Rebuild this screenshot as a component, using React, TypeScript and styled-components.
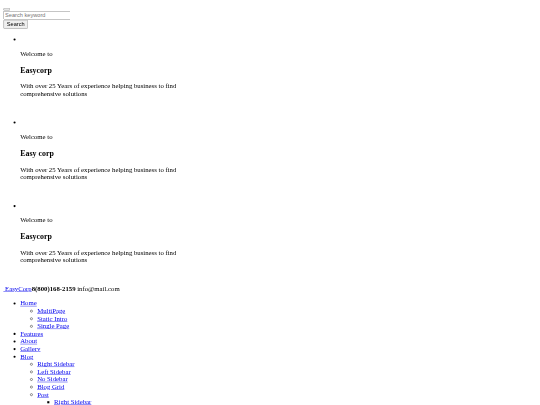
import styled, { createGlobalStyle } from "styled-components";

const GlobalStyle = createGlobalStyle`
  html, body {
    margin: 0;
    padding: 0;
    background: #fff;
    overflow: hidden;
  }
  body {
    font-family: "Liberation Serif", "Times New Roman", serif;
    font-size: 16px;
    color: #000;
  }
`;

// the whole page was captured from a 1280px wide window, scaled down to 540
const Page = styled.div`
  width: 1280px;
  box-sizing: border-box;
  padding: 8px;
  transform: scale(0.421875);
  transform-origin: 0 0;
`;

const Toggler = styled.button`
  font-family: "Liberation Sans", Arial, sans-serif;
  font-size: 13.333px;
`;

const SearchForm = styled.form`
  margin: 0;
`;

const Field = styled.div``;

const SearchInput = styled.input`
  width: 159px;
  box-sizing: border-box;
  font-family: "Liberation Sans", Arial, sans-serif;
  font-size: 13.333px;
  &::placeholder {
    color: #757575;
  }
`;

const SearchButton = styled.button`
  font-family: "Liberation Sans", Arial, sans-serif;
  font-size: 13.333px;
`;

const Slider = styled.ul`
  margin: 16px 0;
  padding-left: 40px;
  list-style: disc;
`;

const Slide = styled.li``;

const Caption = styled.div`
  max-width: 420px;
`;

const Lead = styled.p`
  margin: 16px 0;
`;

const Title = styled.h3`
  font-size: 1.17em;
  font-weight: bold;
  margin: 1em 0;
`;

const Text = styled.p`
  margin: 16px 0;
`;

const Actions = styled.p`
  margin: 16px 0;
`;

const TopBar = styled.div``;

const Link = styled.a`
  color: #0000ee;
  text-decoration: underline;
  cursor: pointer;
`;

const Phone = styled.b`
  font-weight: bold;
`;

const Menu = styled.ul<{ $level: number }>`
  margin: ${(p) => (p.$level === 0 ? "16px 0" : "0")};
  padding-left: 40px;
  list-style: ${(p) => ["disc", "circle", "square"][Math.min(p.$level, 2)]};
`;

const MenuItem = styled.li``;

type NavNode = { label: string; children?: NavNode[] };

const slides = [
  { title: "Easycorp" },
  { title: "Easy corp" },
  { title: "Easycorp" },
];

const nav: NavNode[] = [
  {
    label: "Home",
    children: [
      { label: "MultiPage" },
      { label: "Static Intro" },
      { label: "Single Page" },
    ],
  },
  { label: "Features" },
  { label: "About" },
  { label: "Gallery" },
  {
    label: "Blog",
    children: [
      { label: "Right Sidebar" },
      { label: "Left Sidebar" },
      { label: "No Sidebar" },
      { label: "Blog Grid" },
      {
        label: "Post",
        children: [
          { label: "Right Sidebar" },
          { label: "Left Sidebar" },
          { label: "No Sidebar" },
        ],
      },
    ],
  },
  { label: "Contact" },
];

function NavList({ items, level }: { items: NavNode[]; level: number }) {
  return (
    <Menu $level={level}>
      {items.map((item, i) => (
        <MenuItem key={i}>
          <Link href="#">{item.label}</Link>
          {item.children && <NavList items={item.children} level={level + 1} />}
        </MenuItem>
      ))}
    </Menu>
  );
}

export default function App() {
  return (
    <>
      <GlobalStyle />
      <Page>
        <Toggler type="button" />
        <SearchForm onSubmit={(e) => e.preventDefault()}>
          <Field>
            <SearchInput type="text" placeholder="Search keyword" />
          </Field>
          <SearchButton type="submit">Search</SearchButton>
        </SearchForm>

        <Slider>
          {slides.map((s, i) => (
            <Slide key={i}>
              <span>{"\u00a0"}</span>
              <Caption>
                <Lead>Welcome to</Lead>
                <Title>{s.title}</Title>
                <Text>
                  With over 25 Years of experience helping business to find
                  comprehensive solutions
                </Text>
                <Actions>{"\u00a0"}</Actions>
              </Caption>
            </Slide>
          ))}
        </Slider>

        <TopBar>
          <Link href="#">{"\u00a0"}EasyCorp</Link>
          <Phone>8(800)168-2159</Phone> info@mail.com
        </TopBar>

        <nav>
          <NavList items={nav} level={0} />
        </nav>
      </Page>
    </>
  );
}
